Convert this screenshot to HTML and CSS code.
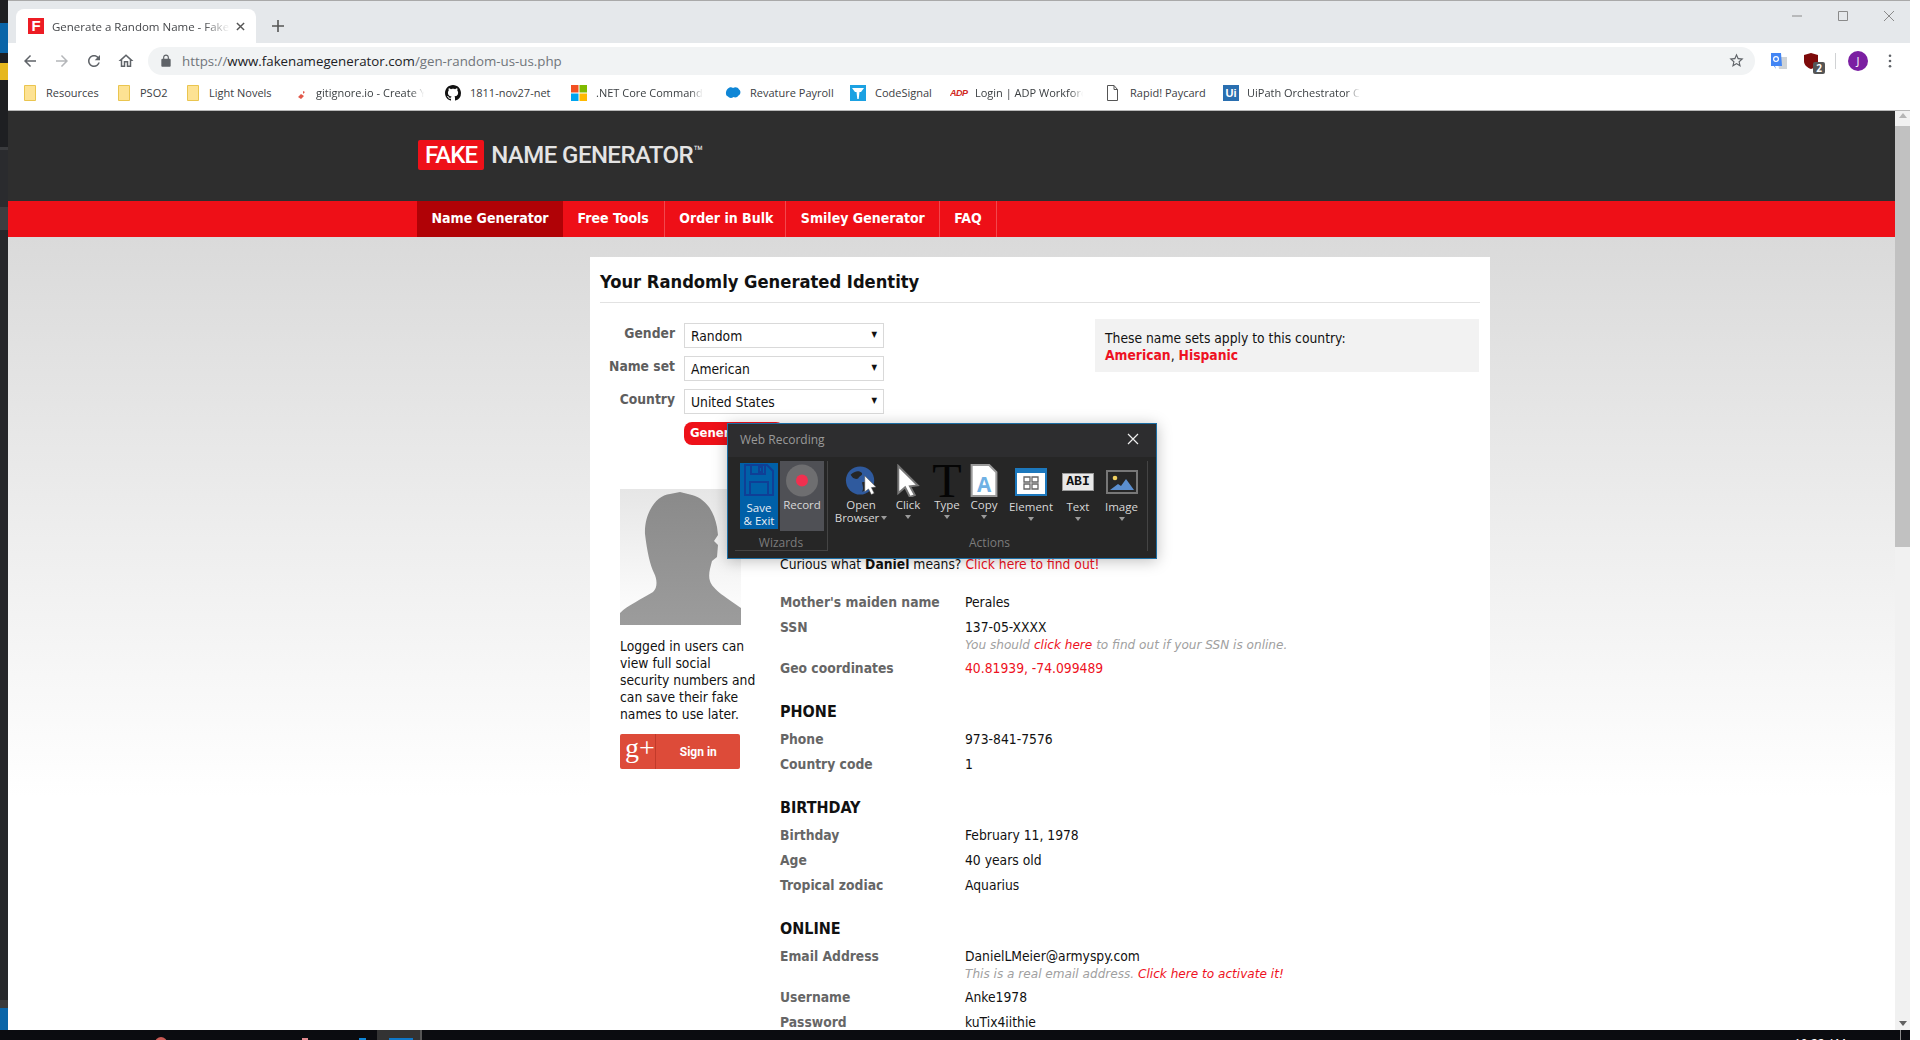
FILE: index.html
```html
<!DOCTYPE html>
<html lang="en">
<head>
  <meta charset="UTF-8" />
  <title>Generate a Random Name - Fake Name Generator</title>
  <link rel="stylesheet" href="styles.css">
</head>
<body>
<div class="screen">
  <div class="desk">
    <div class="strip"></div>
    <div class="window">

      <div class="tabstrip">
        <div class="tab">
          <span class="favicon">F</span>
          <span class="tab-title">Generate a Random Name - Fake Name Generator</span>
          <svg class="tab-close" viewBox="0 0 10 10"><path d="M1 1l8 8M9 1l-8 8"/></svg>
        </div>
        <svg class="new-tab" viewBox="0 0 12 12"><path d="M6 0v12M0 6h12"/></svg>
        <div class="win-controls">
          <svg viewBox="0 0 12 12"><path d="M1 6h10"/></svg>
          <svg viewBox="0 0 12 12"><path d="M1.5 1.5h9v9h-9z"/></svg>
          <svg viewBox="0 0 12 12"><path d="M1 1l10 10M11 1L1 11"/></svg>
        </div>
      </div>

      <div class="toolbar">
        <svg class="nav-icon" viewBox="0 0 24 24"><path d="M20 11H7.83l5.59-5.59L12 4l-8 8 8 8 1.41-1.41L7.83 13H20v-2z"/></svg>
        <svg class="nav-icon dim" viewBox="0 0 24 24"><path d="M12 4l-1.41 1.41L16.17 11H4v2h12.17l-5.58 5.59L12 20l8-8z"/></svg>
        <svg class="nav-icon" viewBox="0 0 24 24"><path d="M17.65 6.35C16.2 4.9 14.21 4 12 4c-4.42 0-7.99 3.58-7.99 8s3.57 8 7.99 8c3.73 0 6.84-2.55 7.73-6h-2.08c-.82 2.33-3.04 4-5.65 4-3.31 0-6-2.69-6-6s2.69-6 6-6c1.66 0 3.14.69 4.22 1.78L13 11h7V4l-2.35 2.35z"/></svg>
        <svg class="nav-icon" viewBox="0 0 24 24"><path d="M12 5.69l5 4.5V18h-2v-6H9v6H7v-7.81l5-4.5M12 3L2 12h3v8h6v-6h2v6h6v-8h3L12 3z"/></svg>
        <div class="omnibox">
          <svg class="lock" viewBox="0 0 24 24"><path d="M18 8h-1V6c0-2.76-2.24-5-5-5S7 3.24 7 6v2H6c-1.1 0-2 .9-2 2v10c0 1.1.9 2 2 2h12c1.1 0 2-.9 2-2V10c0-1.1-.9-2-2-2zM9 6c0-1.66 1.34-3 3-3s3 1.34 3 3v2H9V6z"/></svg>
          <span class="url"><span class="url-dim">https://</span>www.fakenamegenerator.com<span class="url-dim">/gen-random-us-us.php</span></span>
          <svg class="star" viewBox="0 0 24 24"><path d="M22 9.24l-7.19-.62L12 2 9.19 8.63 2 9.24l5.46 4.73L5.82 21 12 17.27 18.18 21l-1.63-7.03L22 9.24zM12 15.4l-3.76 2.27 1-4.28-3.32-2.88 4.38-.38L12 6.1l1.71 4.04 4.38.38-3.32 2.88 1 4.28L12 15.4z"/></svg>
        </div>
        <div class="extensions">
          <svg class="ext-translate" viewBox="0 0 16 16">
            <path fill="#cfd3d6" d="M6 4h10v12H8z"/>
            <path fill="#4285f4" d="M0 0h10l1 13H3l2 3-1-3H0z"/>
            <circle cx="5" cy="6" r="2.4" fill="none" stroke="#fff" stroke-width="1.2"/>
          </svg>
          <div class="ext-ublock">
            <svg viewBox="0 0 14 16"><path fill="#7d0a0a" d="M7 0l7 2v6c0 4-3 6.500-7 8-4-1.500-7-4-7-8V2z"/></svg>
            <span class="ub-badge">2</span>
          </div>
          <span class="ext-sep"></span>
          <span class="profile">J</span>
          <svg class="kebab" viewBox="0 0 4 16"><circle cx="2" cy="2" r="1.500"/><circle cx="2" cy="8" r="1.500"/><circle cx="2" cy="14" r="1.500"/></svg>
        </div>
      </div>

      <div class="bookmarks">
        <div class="bm"><svg class="bm-folder" viewBox="0 0 12 16"><path d="M.5.5h11v15H.5z"/></svg><span>Resources</span></div>
        <div class="bm"><svg class="bm-folder" viewBox="0 0 12 16"><path d="M.5.5h11v15H.5z"/></svg><span>PSO2</span></div>
        <div class="bm"><svg class="bm-folder" viewBox="0 0 12 16"><path d="M.5.5h11v15H.5z"/></svg><span>Light Novels</span></div>
        <div class="bm bm-git"><svg class="bm-icon" viewBox="0 0 16 16"><path d="M8 9l3 2-3 3-3-2zM10 6l2 1-2 2z" fill="#e2584a"/></svg><span class="fade">gitignore.io - Create Your</span></div>
        <div class="bm"><svg class="bm-icon" viewBox="0 0 16 16"><path d="M8 0C3.58 0 0 3.58 0 8c0 3.54 2.29 6.53 5.47 7.59.4.07.55-.17.55-.38 0-.19-.01-.82-.01-1.49-2.01.37-2.53-.49-2.69-.94-.09-.23-.48-.94-.82-1.13-.28-.15-.68-.52-.01-.53.63-.01 1.08.58 1.23.82.72 1.21 1.87.87 2.33.66.07-.52.28-.87.51-1.07-1.78-.2-3.64-.89-3.64-3.95 0-.87.31-1.59.82-2.15-.08-.2-.36-1.02.08-2.12 0 0 .67-.21 2.2.82.64-.18 1.32-.27 2-.27.68 0 1.36.09 2 .27 1.53-1.04 2.2-.82 2.2-.82.44 1.1.16 1.92.08 2.12.51.56.82 1.27.82 2.15 0 3.07-1.87 3.75-3.65 3.95.29.25.54.73.54 1.48 0 1.07-.01 1.93-.01 2.2 0 .21.15.46.55.38A8.013 8.013 0 0016 8c0-4.42-3.58-8-8-8z" fill="#111"/></svg><span>1811-nov27-net</span></div>
        <div class="bm"><svg class="bm-icon" viewBox="0 0 16 16"><path fill="#f25022" d="M0 0h7.500v7.500H0z"/><path fill="#7fba00" d="M8.500 0H16v7.500H8.500z"/><path fill="#00a4ef" d="M0 8.500h7.500V16H0z"/><path fill="#ffb900" d="M8.500 8.500H16V16H8.500z"/></svg><span class="fade">.NET Core Command</span></div>
        <div class="bm"><svg class="bm-icon" viewBox="0 0 16 16"><path fill="#0f86d6" d="M3 3.500C5 1.500 7 2 8 3c2-1.500 5-1 6 1.500 2 1 2 5-.5 6-1 2-3.500 2.500-5 1.500-2 1.500-4.500 1-5.500-.5C.500 11 0 6 3 3.500z"/></svg><span>Revature Payroll</span></div>
        <div class="bm"><svg class="bm-icon" viewBox="0 0 16 16"><path fill="#1ba1e2" d="M0 0h16v16H0z"/><path fill="#fff" d="M2 3h12l-3 4H9.500L8.700 14H7.300L6.500 7H5z"/></svg><span>CodeSignal</span></div>
        <div class="bm"><span class="adp">ADP</span><span class="fade">Login | ADP Workforce Now</span></div>
        <div class="bm"><svg class="bm-doc" viewBox="0 0 11 16"><path d="M.5.5h6.500l3.500 4v11H.500zM7 .5v4h3.500"/></svg><span>Rapid! Paycard</span></div>
        <div class="bm"><span class="ui-logo">Ui</span><span class="fade wide">UiPath Orchestrator Cloud</span></div>
      </div>

      <div class="page">
        <div class="viewport">
          <div class="site-head">
            <span class="logo-box">FAKE</span>
            <span class="logo-text">NAME GENERATOR<sup>™</sup></span>
          </div>
          <div class="site-nav">
            <a class="active">Name Generator</a>
            <a>Free Tools</a>
            <a>Order in Bulk</a>
            <a>Smiley Generator</a>
            <a>FAQ</a>
          </div>
          <div class="site-body">
            <div class="card">
              <h1>Your Randomly Generated Identity</h1>

              <div class="top-row">
                <div class="gen-form">
                  <div class="form-row"><label>Gender</label><div class="select">Random<span class="sel-arrow">▼</span></div></div>
                  <div class="form-row"><label>Name set</label><div class="select">American<span class="sel-arrow">▼</span></div></div>
                  <div class="form-row"><label>Country</label><div class="select">United States<span class="sel-arrow">▼</span></div></div>
                  <div class="form-row"><label></label><div class="gen-btn">Generate</div></div>
                </div>
                <div class="info-box">
                  These name sets apply to this country:<br>
                  <b class="red">American</b>, <b class="red">Hispanic</b>
                </div>
              </div>

              <div class="columns">
                <div class="side">
                  <svg class="avatar" viewBox="0 0 121 136">
                    <defs>
                      <linearGradient id="avBg" x1="0" y1="0" x2="0" y2="1"><stop offset="0" stop-color="#e6e6e6"/><stop offset="1" stop-color="#fff"/></linearGradient>
                      <linearGradient id="avFg" x1="0" y1="0" x2="0" y2="1"><stop offset="0" stop-color="#8a8a8a"/><stop offset="1" stop-color="#9c9c9c"/></linearGradient>
                    </defs>
                    <path fill="url(#avBg)" d="M0 0h121v136H0z"/>
                    <path fill="url(#avFg)" d="M0 136V124C8 116 22 110 33 103C38 98 37 90 34 84C30 76 27 62 25 45C24 25 36 6 50 5L60 3L72 6C86 10 94 22 97 38L98 46L94 52L98 56L97 68L92 72C90 80 88 86 90 92C92 100 108 110 121 119V136Z"/>
                  </svg>
                  <p>Logged in users can view full social security numbers and can save their fake names to use later.</p>
                  <div class="gplus"><span class="gplus-g">g+</span><span class="gplus-txt">Sign in</span></div>
                </div>

                <div class="details">
                  <div class="curious">Curious what <b>Daniel</b> means? <a class="red">Click here to find out!</a></div>

                  <div class="row"><b>Mother's maiden name</b><div>Perales</div></div>
                  <div class="row"><b>SSN</b><div>137-05-XXXX<div class="hint">You should <a class="red">click here</a> to find out if your SSN is online.</div></div></div>
                  <div class="row"><b>Geo coordinates</b><div class="red">40.81939, -74.099489</div></div>

                  <h3>PHONE</h3>
                  <div class="row"><b>Phone</b><div>973-841-7576</div></div>
                  <div class="row"><b>Country code</b><div>1</div></div>

                  <h3>BIRTHDAY</h3>
                  <div class="row"><b>Birthday</b><div>February 11, 1978</div></div>
                  <div class="row"><b>Age</b><div>40 years old</div></div>
                  <div class="row"><b>Tropical zodiac</b><div>Aquarius</div></div>

                  <h3>ONLINE</h3>
                  <div class="row"><b>Email Address</b><div>DanielLMeier@armyspy.com<div class="hint">This is a real email address. <a class="red">Click here to activate it!</a></div></div></div>
                  <div class="row"><b>Username</b><div>Anke1978</div></div>
                  <div class="row"><b>Password</b><div>kuTix4iithie</div></div>
                </div>
              </div>
            </div>
          </div>
        </div>
        <div class="scrollbar">
          <span class="sb-up"></span>
          <span class="sb-thumb"></span>
          <span class="sb-down"></span>
        </div>
      </div>
    </div>
  </div>

  <div class="taskbar">
    <span class="tb-red"></span>
    <span class="tb-pink"></span>
    <span class="tb-blue"></span>
    <span class="tb-active"><i></i></span>
    <span class="tb-clock">10:22 AM</span>
    <span class="tb-line"></span>
  </div>

  <!-- floating recorder window -->
  <div class="recorder">
    <div class="rec-title">
      <span>Web Recording</span>
      <svg viewBox="0 0 12 12"><path d="M1 1l10 10M11 1L1 11"/></svg>
    </div>
    <div class="rec-body">
      <div class="rec-group wizards">
        <div class="rec-tools">
          <div class="tool save">
            <svg class="tool-icon" viewBox="0 0 30 32"><path d="M1 1h22l6 6v24H1zM7 1v9h14V1M6 31V18h18v13M15 3h3v5h-3z" fill="none" stroke="#0f3f96" stroke-width="2"/></svg>
            <span class="tool-label low">Save<br>&amp; Exit</span>
          </div>
          <div class="tool record">
            <svg class="tool-icon" viewBox="0 0 32 32"><circle cx="16" cy="16" r="16" fill="#6e6e70"/><circle cx="16" cy="16" r="6" fill="#f0304f"/></svg>
            <span class="tool-label">Record</span>
          </div>
        </div>
        <div class="rec-caption">Wizards</div>
      </div>
      <div class="rec-group actions">
        <div class="rec-tools">
          <div class="tool w50">
            <svg class="tool-icon" viewBox="0 0 34 32">
              <circle cx="16" cy="16" r="15" fill="#2f5a9e"/>
              <path d="M6 10c4-4 9-5 12-2 1 3-3 3-4 6-3 1-6 0-8-4zM18 18c3-1 7 0 9 2-2 4-5 7-9 8 2-3 1-6 0-10z" fill="#262626"/>
              <path d="M21 11l12 12-5 .500 3 6-3 1.500-3-6-4 3z" fill="#fff" stroke="#555" stroke-width=".6"/>
            </svg>
            <span class="tool-label">Open<br>Browser<i class="caret inline"></i></span>
          </div>
          <div class="tool w44">
            <svg class="tool-icon" viewBox="0 0 24 34"><path d="M2 2l20 20-8 1 5 9-5 2-5-10-7 6z" fill="#fff" stroke="#777" stroke-width="2"/></svg>
            <span class="tool-label">Click</span><i class="caret"></i>
          </div>
          <div class="tool w34">
            <span class="type-t">T</span>
            <span class="tool-label">Type</span><i class="caret"></i>
          </div>
          <div class="tool w40">
            <svg class="tool-icon" viewBox="0 0 26 32">
              <path d="M1 1h17l7 7v23H1z" fill="#fff" stroke="#9a9a9a" stroke-width="2"/>
              <text x="13" y="27" class="svg-a">A</text>
            </svg>
            <span class="tool-label">Copy</span><i class="caret"></i>
          </div>
          <div class="tool w54">
            <svg class="tool-icon icon-element" viewBox="0 0 32 28">
              <path d="M0 0h32v28H0z" fill="#1c78bd"/>
              <path d="M2 5h28v21H2z" fill="#fff"/>
              <path d="M9 9h6v5H9zM17 9h6v5h-6zM9 16h6v5H9zM17 16h6v5h-6z" fill="none" stroke="#666" stroke-width="1.300"/>
            </svg>
            <span class="tool-label low">Element</span><i class="caret"></i>
          </div>
          <div class="tool w40">
            <span class="abi">ABI</span>
            <span class="tool-label low">Text</span><i class="caret"></i>
          </div>
          <div class="tool w47">
            <svg class="tool-icon icon-image" viewBox="0 0 32 24">
              <path d="M1 1h30v22H1z" fill="#262626" stroke="#777" stroke-width="2"/>
              <circle cx="9" cy="8" r="2.300" fill="#f0d060"/>
              <path d="M4 20l8-6 3 2 5-7 8 11z" fill="#5b8fd0"/>
            </svg>
            <span class="tool-label low">Image</span><i class="caret"></i>
          </div>
        </div>
        <div class="rec-caption">Actions</div>
      </div>
    </div>
  </div>
</div>
</body>
</html>
```

FILE: styles.css
```css
* { box-sizing: border-box; }
html, body { margin: 0; padding: 0; background: #fff; }

.screen {
  position: relative;
  width: 1920px; height: 1040px;
  overflow: hidden;
  font-family: "DejaVu Sans Condensed", "DejaVu Sans", sans-serif;
  font-size: 13.75px;
}

.desk { display: flex; width: 1910px; height: 1030px; }

/* sliver of the desktop visible left of the browser */
.strip {
  flex: 0 0 8px;
  background: linear-gradient(180deg,
    #1e1f22 0, #1e1f22 23px,
    #0a65a8 23px, #0a65a8 53px,
    #1e1f22 53px, #1e1f22 63px,
    #e6b71e 63px, #e6b71e 80px,
    #1e1f22 80px, #1e1f22 147px,
    #3a3b3e 147px, #3a3b3e 150px,
    #2a2b2e 150px, #2a2b2e 207px,
    #3c3d40 207px, #3c3d40 230px,
    #26272a 230px, #26272a 1000px,
    #3a3a3a 1000px, #3a3a3a 1008px,
    #0a65a8 1008px, #0a65a8 1030px);
}

.window { flex: 1; display: flex; flex-direction: column; min-width: 0; }

/* browser chrome */
.tabstrip {
  height: 43px;
  display: flex;
  align-items: flex-end;
  padding-left: 8px;
  background: #e5e8eb;
  border-top: 1px solid #a9a9a9;
}
.tab {
  width: 240px; height: 34px;
  display: flex; align-items: center;
  padding: 0 11px 0 12px;
  background: #fff;
  border-radius: 8px 8px 0 0;
}
.favicon {
  flex: 0 0 16px; height: 16px;
  background: #ed1c24; color: #fff;
  font: bold 15px/16px "Liberation Sans", sans-serif;
  text-align: center;
}
.tab-title {
  flex: 1; margin: 0 6px 0 8px;
  white-space: nowrap; overflow: hidden;
  font: 11.5px "Open Sans", sans-serif;
  color: #45474a;
  -webkit-mask-image: linear-gradient(90deg, #000 85%, transparent);
  mask-image: linear-gradient(90deg, #000 85%, transparent);
}
.tab-close { width: 9px; height: 9px; fill: none; stroke: #555; stroke-width: 1.6; }
.new-tab {
  width: 12px; height: 12px;
  margin: 0 0 11px 16px;
  fill: none; stroke: #555; stroke-width: 1.6;
}
.win-controls {
  margin-left: auto;
  align-self: flex-start;
  display: flex; gap: 34px;
  padding: 9px 15px 0 0;
}
.win-controls svg { width: 12px; height: 12px; fill: none; stroke: #8a8a8a; stroke-width: 1; }

.toolbar {
  height: 35px;
  display: flex; align-items: center;
  padding-left: 13px;
  background: #fff;
}
.nav-icon { width: 18px; height: 18px; margin-right: 14px; fill: #5f6368; }
.nav-icon:nth-child(4) { margin-right: 13px; }
.nav-icon.dim { fill: #b4b6b9; }
.omnibox {
  width: 1607px; height: 28px;
  display: flex; align-items: center;
  padding: 0 10px 0 11px;
  background: #f1f3f4;
  border-radius: 14px;
}
.lock { width: 14px; height: 14px; fill: #5f6368; }
.url { margin-left: 9px; font: 13.3px "Open Sans", sans-serif; color: #202124; white-space: nowrap; }
.url-dim { color: #70757a; }
.star { width: 17px; height: 17px; margin-left: auto; fill: #5f6368; }
.extensions { flex: 1; display: flex; align-items: center; padding-left: 16px; }
.ext-translate { width: 16px; height: 16px; }
.ext-ublock { position: relative; width: 14px; height: 16px; margin-left: 17px; }
.ext-ublock svg { display: block; width: 14px; height: 16px; }
.ub-badge {
  position: absolute; left: 9px; top: 9px;
  width: 12px; height: 12px;
  background: #555; color: #fff; border-radius: 2px;
  font: bold 10px/12px "Open Sans", sans-serif; text-align: center;
}
.ext-sep { width: 1px; height: 16px; margin-left: 17px; background: #d0d2d4; }
.profile {
  width: 20px; height: 20px; margin-left: 12px;
  border-radius: 50%;
  background: #7b1fa2; color: #fff;
  font: 11px/20px "Open Sans", sans-serif; text-align: center;
}
.kebab { width: 4px; height: 14px; margin-left: 20px; fill: #5f6368; }

.bookmarks {
  height: 33px;
  display: grid;
  grid-template-columns: 94px 69px 106px 152px 126px 154px 125px 100px 154px 119px 1fr;
  align-items: center;
  padding: 0 0 3px 16px;
  background: #fff;
  border-bottom: 1px solid #b9b9b9;
  font: 11px "Open Sans", sans-serif;
  color: #3c4043;
}
.bm { display: flex; align-items: center; overflow: hidden; white-space: nowrap; }
.bm-folder { flex: none; width: 12px; height: 16px; margin-right: 10px; fill: #fde293; stroke: #eac54f; }
.bm-icon { flex: none; width: 16px; height: 16px; margin-right: 9px; }
.bm-doc { flex: none; width: 11px; height: 16px; margin: 0 12px 0 3px; fill: #fff; stroke: #555; }
.bm-git .bm-icon { margin-right: 7px; }
.fade {
  overflow: hidden;
  max-width: 108px;
  -webkit-mask-image: linear-gradient(90deg, #000 88%, transparent);
  mask-image: linear-gradient(90deg, #000 88%, transparent);
}
.fade.wide { max-width: 113px; }
.adp {
  flex: none; width: 17px; margin-right: 8px;
  font: italic bold 9px/16px "Liberation Sans", sans-serif;
  color: #d0271d; letter-spacing: -.5px;
}
.ui-logo {
  flex: none; width: 16px; height: 16px; margin-right: 8px;
  background: #2a6fb0; color: #fff;
  font: bold 11px/16px "Liberation Sans", sans-serif; text-align: center;
}

/* the site */
.page { flex: 1; display: flex; min-height: 0; }
.viewport { flex: 1; min-width: 0; display: flex; flex-direction: column; overflow: hidden; }

.site-head {
  flex: 0 0 90px;
  display: flex; align-items: center;
  padding: 0 0 3px 410px;
  background: #2e2e2e;
}
.logo-box {
  padding: 0 7px;
  height: 30px;
  background: #ee1119; color: #fff;
  border-radius: 2px;
  font: 500 24px/30px Roboto, sans-serif;
  letter-spacing: -.9px;
}
.logo-text {
  margin-left: 7px;
  font: 500 24px/30px Roboto, sans-serif;
  color: #e4e4e4;
  letter-spacing: -.55px;
  white-space: nowrap;
}
.logo-text sup { font-size: 16px; font-weight: 400; line-height: 0; vertical-align: 6px; letter-spacing: 0; }

.site-nav {
  flex: 0 0 36px;
  display: flex;
  padding-left: 409px;
  background: #ee0f17;
}
.site-nav a {
  display: block;
  padding: 0 14px 0 14.500px;
  border-right: 1px solid #f2474d;
  color: #fff;
  font-weight: bold;
  font-size: 14px;
  line-height: 34px;
}
.site-nav a.active { background: #b00206; border-right: 0; }
.site-nav a:nth-child(2) { padding: 0 15px; }
.site-nav a:nth-child(3) { padding-right: 12px; }

.site-body {
  flex: 1;
  padding: 20px 0 0 582px;
  background: linear-gradient(180deg, #dadada 0, #fff 560px);
  overflow: hidden;
}
.card { width: 900px; min-height: 900px; padding: 0 10px; background: #fff; }
.card h1 {
  margin: 0;
  padding: 12px 0 8px;
  border-bottom: 1px solid #e2e2e2;
  font-size: 18.2px; line-height: 25px;
  color: #111;
}
.red { color: #ee1122; }

.top-row { display: flex; align-items: flex-start; padding-top: 17px; }
.gen-form { padding-top: 3px; }
.form-row { display: flex; gap: 9px; margin-bottom: 8px; }
.form-row label {
  width: 75px;
  text-align: right;
  font-weight: bold; line-height: 20px;
  color: #5e5e5e;
}
.select {
  width: 200px; height: 25px;
  display: flex; align-items: center; justify-content: space-between;
  padding: 0 6px;
  border: 1px solid #d9d9d9;
  background: #fff; color: #111;
}
.sel-arrow { font-size: 8px; margin-top: -3px; color: #111; }
.gen-btn {
  width: 100px; height: 23px;
  padding-left: 6px;
  background: #ee1119; color: #fff;
  border-radius: 8px;
  font-weight: bold; font-size: 13px; line-height: 22px;
}
.info-box {
  width: 384px; height: 53px;
  margin: -1px 1px 0 auto;
  padding: 11px 10px 0;
  background: #f2f2f2;
  line-height: 17px; color: #111;
}

.columns { display: flex; padding: 36px 0 0 20px; }
.side { flex: 0 0 160px; color: #111; }
.avatar { display: block; width: 121px; height: 136px; }
.side p { width: 140px; margin: 13px 0 11px; line-height: 17px; }
.gplus {
  width: 120px; height: 35px;
  display: flex; align-items: center;
  background: #dd4b39; color: #fff;
  border-radius: 2px;
}
.gplus-g {
  flex: 0 0 35px; height: 35px;
  padding-left: 5px;
  border-right: 1px solid #c23a2a;
  font: 28px/28px "Liberation Serif", serif;
}
.gplus-txt { flex: 1; padding-left: 24px; font: bold 12px Roboto, sans-serif; }

.details { flex: 1; padding-top: 65px; color: #111; line-height: 20px; }
.curious { margin-bottom: 18px; }
.row { display: flex; margin-bottom: 5px; }
.row > b { flex: 0 0 185px; color: #666; }
.hint {
  padding-top: 1px;
  font-family: "DejaVu Sans", sans-serif;
  font-size: 12.1px; line-height: 15px; font-style: italic;
  color: #a0a0a0;
}
.details h3 { margin: 23.5px 0 7.5px; font-size: 16px; line-height: 20px; color: #111; }

.scrollbar {
  flex: 0 0 15px;
  display: flex; flex-direction: column; align-items: center;
  background: #f1f1f1;
}
.sb-up, .sb-down { width: 0; height: 0; border: 4px solid transparent; }
.sb-up { margin-top: 2px; border-top: 0; border-bottom: 5px solid #b5b5b5; }
.sb-thumb { width: 15px; height: 421px; margin-top: 8px; background: #c1c1c1; }
.sb-down { margin-top: auto; margin-bottom: 4px; border-bottom: 0; border-top: 5px solid #606060; }

/* taskbar, only the top few pixels are on screen */
.taskbar {
  width: 1910px; height: 10px;
  display: flex; align-items: flex-start;
  background: #0b0c10;
  overflow: hidden;
}
.tb-red { width: 12px; height: 12px; margin: 7px 0 0 155px; border-radius: 50%; background: #c85a55; }
.tb-pink { width: 6px; height: 8px; margin: 8px 0 0 135px; background: #e08a90; }
.tb-blue { width: 7px; height: 8px; margin: 8px 0 0 51px; background: #0f86d6; }
.tb-active { width: 45px; height: 10px; margin-left: 11px; padding: 8px 0 0 12px; background: #333; border-right: 2px solid #555; }
.tb-active i { display: block; width: 24px; height: 4px; background: #0f78c8; }
.tb-clock { margin: 6px 0 0 1372px; color: #fff; font: 12px/16px "Open Sans", sans-serif; }
.tb-line { width: 1px; height: 10px; margin-left: 54px; background: #888; }

/* recorder window floating over the page */
.recorder {
  position: absolute;
  left: 727px; top: 423px;
  width: 430px; height: 136px;
  background: #262626;
  border: 1px solid #1c6ea4;
  box-shadow: 0 2px 14px rgba(0, 0, 0, .25);
  font-family: "Open Sans", sans-serif;
  font-size: 11.5px;
}
.rec-title {
  height: 33px;
  display: flex; align-items: center; justify-content: space-between;
  padding: 0 17px 3px 12px;
  background: #2d2d2f;
  color: #9a9a9a; font-size: 12px;
}
.rec-title svg { width: 12px; height: 12px; fill: none; stroke: #eee; stroke-width: 1.2; }
.rec-body { display: flex; height: 101px; padding-top: 4px; }
.rec-group { display: flex; flex-direction: column; }
.wizards {
  flex: 0 0 100px;
  padding-left: 12px;
  border-right: 1px solid #444;
  margin-bottom: 7px;
}
.actions { flex: 0 0 320px; padding-left: 8px; border-right: 1px solid #444; margin-bottom: 7px; }
.rec-tools { flex: none; display: flex; height: 70px; }
.wizards .rec-tools { gap: 2px; }
.rec-caption {
  flex: none;
  height: 16px; margin-top: 4px;
  text-align: center; line-height: 16px;
  color: #7c7c7c; font-size: 12px;
}
.actions .rec-caption { margin-left: -4px; }
.wizards .rec-caption { margin-left: -5px; border-bottom: 1px solid #444; }
.tool {
  display: flex; flex-direction: column; align-items: center;
  padding-top: 3px;
  color: #d8d8d8;
}
.w50 { width: 50px; } .w44 { width: 44px; } .w34 { width: 34px; }
.w40 { width: 40px; } .w54 { width: 54px; } .w47 { width: 47px; }
.tool-icon { display: block; width: 32px; height: 33px; margin-bottom: 1px; }
.tool-label { line-height: 13px; text-align: center; white-space: nowrap; }
.tool-label.low { margin-top: 2px; }
.save { width: 38px; height: 66px; margin-top: 2px; padding-top: 1px; background: #0060a8; color: #e8eef4; }
.record { width: 44px; padding-top: 3px; background: #4f5055; }
.save .tool-icon { height: 32px; width: 30px; margin-bottom: 3px; }
.caret {
  display: block; width: 0; height: 0;
  margin-top: 4px;
  border: 3px solid transparent; border-bottom: 0; border-top: 4px solid #9a9a9a;
}
.caret.inline { display: inline-block; margin: 0 0 2px 2px; }
.type-t {
  height: 33px; margin-bottom: 1px;
  font: 48px/33px "Liberation Serif", serif;
  color: #050505;
}
.svg-a { font: bold 20px "Open Sans", sans-serif; fill: #6fb1e4; text-anchor: middle; }
.icon-element { height: 28px; margin: 4px 0 2px; }
.icon-image { height: 24px; margin: 6px 0 4px; }
.abi {
  width: 32px; height: 18px; margin: 9px 0 7px;
  background: #e8e8e8; color: #111;
  border: 1px solid #999;
  font: bold 13px/16px "Liberation Mono", monospace;
  text-align: center;
}
```
